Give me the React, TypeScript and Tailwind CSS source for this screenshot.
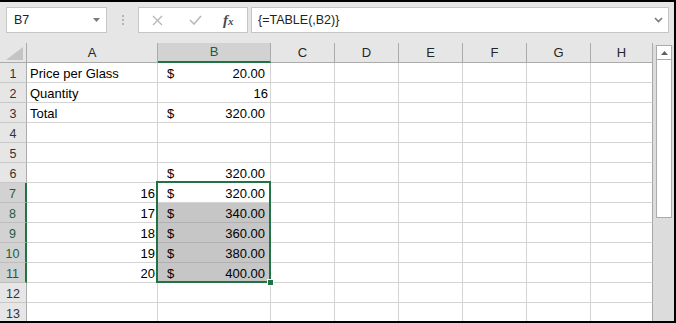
import React from "react";

const cols = ["A", "B", "C", "D", "E", "F", "G", "H"];

type Row = { a?: string; aNum?: boolean; b?: string; bDollar?: boolean };

const rows: Row[] = [
  { a: "Price per Glass", b: "20.00", bDollar: true },
  { a: "Quantity", b: "16" },
  { a: "Total", b: "320.00", bDollar: true },
  {},
  {},
  { b: "320.00", bDollar: true },
  { a: "16", aNum: true, b: "320.00", bDollar: true },
  { a: "17", aNum: true, b: "340.00", bDollar: true },
  { a: "18", aNum: true, b: "360.00", bDollar: true },
  { a: "19", aNum: true, b: "380.00", bDollar: true },
  { a: "20", aNum: true, b: "400.00", bDollar: true },
  {},
  {},
];

function FormulaBar() {
  return (
    <div className="h-[41px] shrink-0 flex items-start pt-[5px] pl-[6px] text-[12.5px] text-[#222]">
      <div className="w-[101px] h-[26px] bg-white border border-[#c6c6c6] flex items-center justify-between pl-[7px] pr-[6px]">
        <span>B7</span>
        <svg width="7" height="4" viewBox="0 0 7 4">
          <polygon points="0,0 7,0 3.5,4" fill="#7a7a7a" />
        </svg>
      </div>
      <div className="w-[31px] h-[26px] flex flex-col items-center justify-center gap-[2px] pl-[1px]">
        <div className="w-[2px] h-[2px] bg-[#b4b4b4]" />
        <div className="w-[2px] h-[2px] bg-[#b4b4b4]" />
        <div className="w-[2px] h-[2px] bg-[#b4b4b4]" />
      </div>
      <div className="w-[110px] h-[26px] bg-white border border-[#c6c6c6] flex items-center">
        <div className="w-[37px] flex justify-center">
          <svg width="11" height="11" viewBox="0 0 11 11">
            <path d="M1 1 L10 10 M10 1 L1 10" stroke="#b8b8b8" strokeWidth="1.4" />
          </svg>
        </div>
        <div className="w-[38px] flex justify-center">
          <svg width="13" height="10" viewBox="0 0 13 10">
            <path d="M1 5 L5 9 L12 1" stroke="#b8b8b8" strokeWidth="1.6" fill="none" />
          </svg>
        </div>
        <div className="pl-[9px] font-['Liberation_Serif',serif] italic font-bold text-[#4a4a4a] text-[15px] leading-none">
          f<span className="text-[11px]">x</span>
        </div>
      </div>
      <div className="ml-[3px] w-[418px] h-[26px] bg-white border border-[#c6c6c6] flex items-center justify-between pl-[6px] pr-[5px]">
        <span>{"{=TABLE(,B2)}"}</span>
        <svg width="9" height="6" viewBox="0 0 9 6">
          <path d="M1 1 L4.5 4.5 L8 1" stroke="#7a7a7a" strokeWidth="1.6" fill="none" />
        </svg>
      </div>
    </div>
  );
}

function Sheet() {
  return (
    <div className="relative w-[653px] shrink-0">
      <div className="grid grid-cols-[27px_131px_113px_64px_64px_64px_64px_64px_62px] text-[13px] text-black">
        <div className="h-[20px] bg-[#e6e6e6] border-r border-b border-[#ababab] flex items-end justify-end pr-[3px] pb-[2px]">
          <svg width="17" height="13" viewBox="0 0 17 13">
            <polygon points="17,0 17,13 0,13" fill="#c4c4c4" />
          </svg>
        </div>
        {cols.map((c) =>
          c === "B" ? (
            <div
              key={c}
              className="h-[20px] bg-[#d2d2d2] border-r border-[#ababab] border-b-2 border-b-[#217346] flex items-center justify-center text-[13px] text-[#1e5c3a]"
            >
              {c}
            </div>
          ) : (
            <div
              key={c}
              className="h-[20px] bg-[#e6e6e6] border-r border-b border-[#ababab] flex items-center justify-center text-[13px] text-[#262626]"
            >
              {c}
            </div>
          )
        )}
        {rows.map((r, i) => {
          const n = i + 1;
          const sel = n >= 7 && n <= 11;
          const shaded = n >= 8 && n <= 11;
          return (
            <React.Fragment key={n}>
              <div
                className={
                  sel
                    ? "h-[20px] bg-[#d2d2d2] border-b border-[#bdbdbd] border-r-2 border-r-[#217346] flex items-end justify-center leading-[16px] text-[12.5px] text-[#1e5c3a]"
                    : "h-[20px] bg-[#e6e6e6] border-b border-[#c8c8c8] border-r border-r-[#ababab] flex items-end justify-center leading-[16px] text-[12.5px] text-[#333]"
                }
              >
                {n}
              </div>
              <div
                className={
                  "h-[20px] border-r border-b border-[#d4d4d4] flex items-end leading-[16px] whitespace-nowrap " +
                  (r.aNum ? "justify-end pr-[2px]" : "pl-[3px]")
                }
              >
                {r.a}
              </div>
              <div
                className={
                  "h-[20px] border-r border-b flex items-end leading-[16px] " +
                  (shaded ? "bg-[#c6c6c6] border-[#b0b0b0] " : "border-[#d4d4d4] ") +
                  (r.bDollar ? "justify-between pl-[9px] pr-[5px]" : "justify-end pr-[2px]")
                }
              >
                {r.bDollar && <span>$</span>}
                {r.b && <span>{r.b}</span>}
              </div>
              <div className="h-[20px] border-r border-b border-[#d4d4d4]" />
              <div className="h-[20px] border-r border-b border-[#d4d4d4]" />
              <div className="h-[20px] border-r border-b border-[#d4d4d4]" />
              <div className="h-[20px] border-r border-b border-[#d4d4d4]" />
              <div className="h-[20px] border-r border-b border-[#d4d4d4]" />
              <div className="h-[20px] border-r border-r-[#a6a6a6] border-b border-b-[#d4d4d4]" />
            </React.Fragment>
          );
        })}
      </div>
      <div className="absolute left-[156px] top-[138px] w-[115px] h-[102px] border-2 border-[#217346] pointer-events-none">
        <div className="absolute -right-[5px] -bottom-[5px] w-[7px] h-[7px] bg-[#217346] border border-white" />
      </div>
    </div>
  );
}

function Scrollbar() {
  return (
    <div className="w-[21px] flex flex-col bg-[#dcdcdc]">
      <div className="h-[2px] bg-[#e6e6e6]" />
      <div className="ml-[3px] w-[16px] h-[15px] bg-white border border-[#ababab] flex items-center justify-center">
        <svg width="7" height="4" viewBox="0 0 7 4">
          <polygon points="0,4 7,4 3.5,0" fill="#606060" />
        </svg>
      </div>
      <div className="ml-[3px] w-[16px] h-[158px] bg-white border border-[#ababab] border-t-0" />
    </div>
  );
}

export default function App() {
  return (
    <div className="w-[676px] h-[323px] border-t-2 border-r-2 border-b-2 border-black bg-[#e6e6e6] flex flex-col overflow-hidden font-['Liberation_Sans',Arial,sans-serif]">
      <FormulaBar />
      <div className="flex-1 min-h-0 flex overflow-hidden bg-white">
        <Sheet />
        <Scrollbar />
      </div>
    </div>
  );
}
